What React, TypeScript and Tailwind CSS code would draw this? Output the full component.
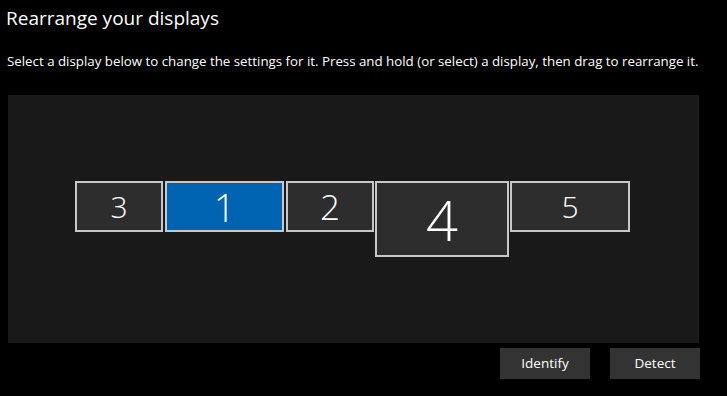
import React from 'react';

interface Display {
  id: string;
  left: number;
  width: number;
  height: number;
  size: string;
  selected?: boolean;
}

const displays: Display[] = [
  { id: '3', left: 67, width: 88, height: 51, size: 'text-[30px]' },
  { id: '1', left: 157, width: 119, height: 51, size: 'text-[38px]', selected: true },
  { id: '2', left: 278, width: 88, height: 51, size: 'text-[35px]' },
  { id: '4', left: 367, width: 134, height: 76, size: 'text-[56px]' },
  { id: '5', left: 502, width: 120, height: 51, size: 'text-[30px]' },
];

export default function App() {
  return (
    <div
      className="w-[727px] h-[396px] bg-black text-white overflow-hidden"
      style={{ fontFamily: '"Open Sans", "Noto Sans", sans-serif' }}
    >
      <h1 className="pl-[6px] pt-[4px] text-[19px] leading-[28px] font-normal">Rearrange your displays</h1>
      <p className="pl-[7px] pt-[20px] text-[13.3px] leading-[18px]">
        Select a display below to change the settings for it. Press and hold (or select) a display, then drag to rearrange it.
      </p>

      {/* arrangement canvas */}
      <div className="relative ml-[8px] mt-[25px] w-[691px] h-[248px] bg-[#191919]">
        {displays.map((d) => (
          <div
            key={d.id}
            className={`absolute top-[86px] flex items-center justify-center border-2 border-[#c8c8c8] font-light ${
              d.selected ? 'bg-[#0063b1]' : 'bg-[#2d2d2d]'
            }`}
            style={{ left: d.left, width: d.width, height: d.height }}
          >
            <span className={`${d.size} leading-none`}>{d.id}</span>
          </div>
        ))}
      </div>

      <div className="flex justify-end gap-[20px] pr-[27px] mt-[5px]">
        <button className="w-[90px] h-[31px] bg-[#333333] text-[13.5px] text-white">Identify</button>
        <button className="w-[90px] h-[31px] bg-[#333333] text-[13.5px] text-white">Detect</button>
      </div>
    </div>
  );
}
